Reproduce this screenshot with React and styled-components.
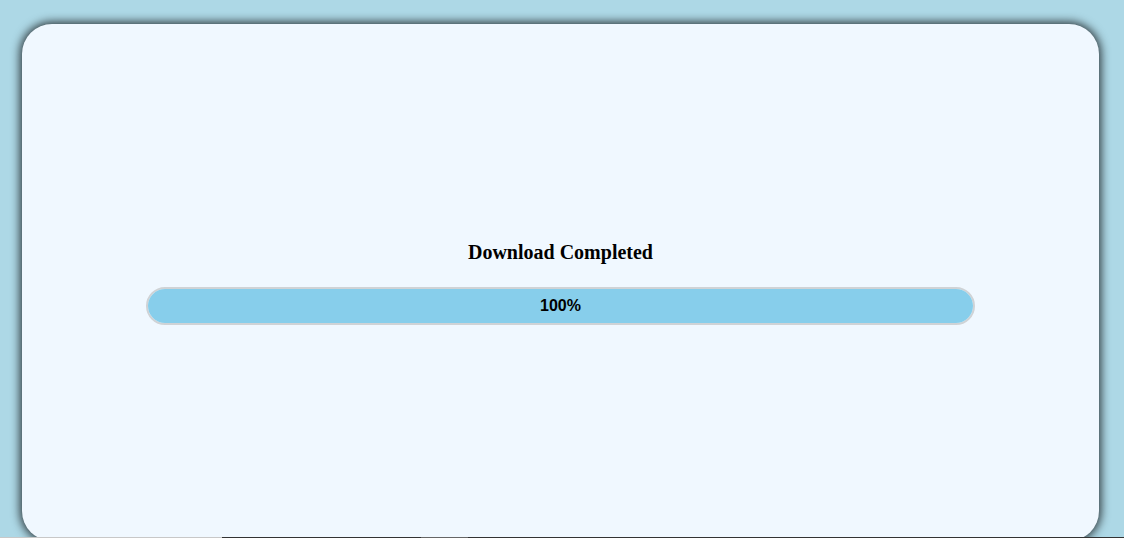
import React from "react";
import styled, { createGlobalStyle } from "styled-components";

const Global = createGlobalStyle`
  html, body { margin: 0; padding: 0; }
  body {
    background: #add8e6;
    height: 538px;
    overflow: hidden;
    font-family: "Liberation Serif", "Times New Roman", serif;
  }
`;

const Page = styled.div`
  padding: 24px 0 0 22px;
  display: flex;
`;

const Card = styled.div`
  width: 1077px;
  height: 517px;
  box-sizing: border-box;
  background: #f0f8ff;
  border-radius: 30px;
  box-shadow: 0 0 10px 2px rgba(0, 0, 0, 0.75);
  display: flex;
  flex-direction: column;
  align-items: center;
  justify-content: center;
`;

const Title = styled.h3`
  margin: 0 0 23px;
  font-size: 20px;
  font-weight: bold;
  color: #000;
`;

const Track = styled.div`
  width: 829px;
  height: 38px;
  box-sizing: border-box;
  border: 2px solid #cfd3d6;
  border-radius: 19px;
  background: #f0f8ff;
  overflow: hidden;
`;

const Fill = styled.div`
  height: 100%;
  background: #87ceeb;
  display: flex;
  align-items: center;
  justify-content: center;
  font-family: "Liberation Sans", Arial, sans-serif;
  font-weight: bold;
  font-size: 16px;
  color: #000;
`;

const Strip = styled.div`
  position: fixed;
  left: 0;
  right: 0;
  bottom: 0;
  height: 1px;
  display: flex;
`;

const StripPart = styled.div`
  width: ${(p) => p.$w};
  flex: ${(p) => (p.$grow ? 1 : "none")};
  background: ${(p) => p.$c};
`;

export default function App() {
  const progress = 100;
  return (
    <>
      <Global />
      <Page>
        <Card>
          <Title>Download Completed</Title>
          <Track>
            <Fill style={{ width: `${progress}%` }}>{progress}%</Fill>
          </Track>
        </Card>
      </Page>
      <Strip>
        <StripPart $w="222px" $c="#c8c8c8" />
        <StripPart $w="199px" $c="#333333" />
        <StripPart $w="47px" $c="#666666" />
        <StripPart $grow $c="#333333" />
      </Strip>
    </>
  );
}
